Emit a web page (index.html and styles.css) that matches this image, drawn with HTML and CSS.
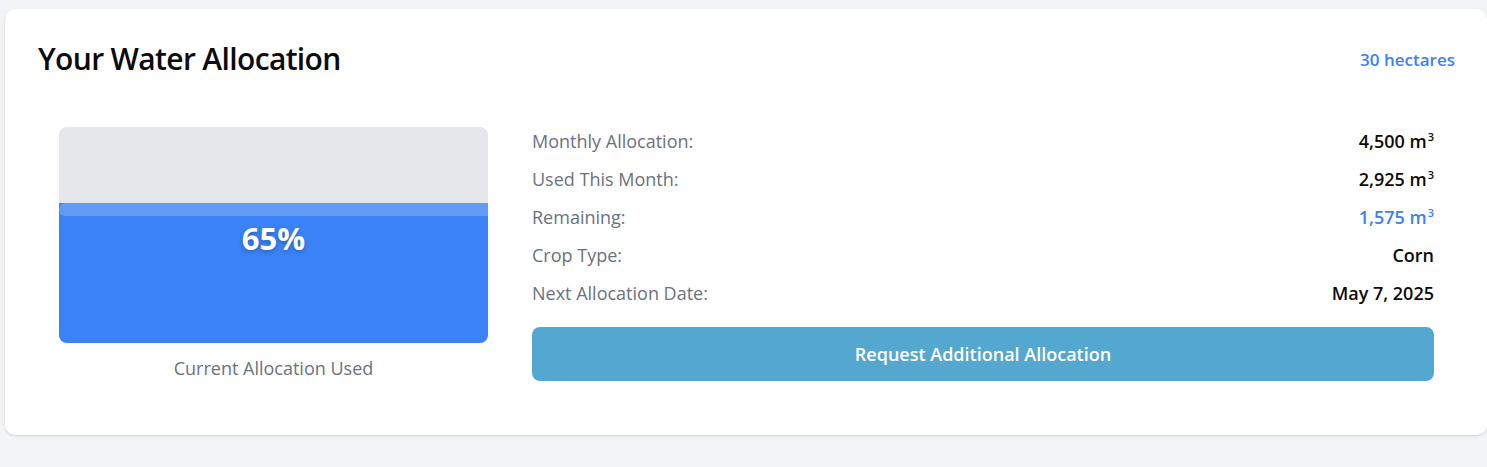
FILE: index.html
```html
<!DOCTYPE html>
<html lang="en">
<head>
<meta charset="utf-8">
<title>Your Water Allocation</title>
<link rel="stylesheet" href="styles.css">
</head>
<body>
<div class="page">
  <section class="card">
    <header class="card-header">
      <h2 class="title">Your Water Allocation</h2>
      <span class="area">30 hectares</span>
    </header>
    <div class="content">
      <div class="gauge-col">
        <div class="gauge">
          <div class="gauge-fill" style="height: 65%;">
            <div class="gauge-wave"></div>
          </div>
          <div class="gauge-label">65%</div>
        </div>
        <p class="gauge-caption">Current Allocation Used</p>
      </div>
      <div class="details-col">
        <div class="rows">
          <div class="row"><span class="label">Monthly Allocation:</span><span class="value">4,500 m<sup>3</sup></span></div>
          <div class="row"><span class="label">Used This Month:</span><span class="value">2,925 m<sup>3</sup></span></div>
          <div class="row"><span class="label">Remaining:</span><span class="value value-blue">1,575 m<sup>3</sup></span></div>
          <div class="row"><span class="label">Crop Type:</span><span class="value">Corn</span></div>
          <div class="row"><span class="label">Next Allocation Date:</span><span class="value">May 7, 2025</span></div>
        </div>
        <button class="request-btn" type="button">Request Additional Allocation</button>
      </div>
    </div>
  </section>
</div>
</body>
</html>
```

FILE: styles.css
```css
* { box-sizing: border-box; }
html, body { margin: 0; padding: 0; }
body {
  background: #f3f4f6;
  font-family: "Open Sans", "Noto Sans", sans-serif;
  color: #111;
}
.page {
  padding: 9px 0 0 5px;
  height: 467px;
}
.card {
  background: #fff;
  border-radius: 10px;
  box-shadow: 0 1px 3px rgba(0,0,0,0.1), 0 1px 2px rgba(0,0,0,0.06);
  padding: 32px 32px 32px 33px;
}
.card-header {
  display: flex;
  justify-content: space-between;
  align-items: center;
  height: 36px;
  margin-bottom: 29px;
}
.title {
  margin: 0;
  font-size: 30px;
  font-weight: 600;
  letter-spacing: -0.65px;
  color: #0b0b0b;
  line-height: 36px;
}
.area {
  color: #3b82f6;
  font-size: 17px;
  font-weight: 600;
}
.content {
  display: grid;
  grid-template-columns: 472px 1fr;
}
.gauge-col {
  padding: 21px 22px 21px 21px;
  display: flex;
  flex-direction: column;
  align-items: stretch;
}
.gauge {
  position: relative;
  height: 216px;
  background: #e5e7eb;
  border-radius: 8px;
  overflow: hidden;
  display: flex;
  flex-direction: column;
  justify-content: flex-end;
}
.gauge-fill {
  position: relative;
  background: #3b82f6;
}
.gauge-wave {
  height: 13px;
  background: rgba(255,255,255,0.2);
  border-radius: 6px 0 0 6px;
}
.gauge-label {
  position: absolute;
  inset: 0;
  display: flex;
  align-items: center;
  justify-content: center;
  padding-top: 5px;
  color: #fff;
  font-size: 31px;
  font-weight: 700;
  text-shadow: 0 2px 4px rgba(0,0,0,0.25);
}
.gauge-caption {
  margin: 11px 0 0;
  text-align: center;
  color: #6b7280;
  font-size: 18px;
  line-height: 28px;
}
.details-col {
  padding: 21px 21px 21px 22px;
  display: flex;
  flex-direction: column;
  gap: 20px;
}
.rows {
  display: flex;
  flex-direction: column;
  gap: 10px;
}
.row {
  display: flex;
  justify-content: space-between;
  align-items: center;
  height: 28px;
}
.label {
  color: #6b7280;
  font-size: 18px;
}
.value {
  font-size: 18px;
  font-weight: 600;
  color: #0b0b0b;
}
.value sup {
  font-size: 11px;
  vertical-align: 7px;
  line-height: 0;
  margin-left: 1px;
}
.value-blue { color: #3b82f6; }
.request-btn {
  height: 54px;
  border: 0;
  border-radius: 8px;
  background: #54a8d0;
  color: #fff;
  font-family: inherit;
  font-size: 18px;
  font-weight: 600;
  cursor: pointer;
}
```
